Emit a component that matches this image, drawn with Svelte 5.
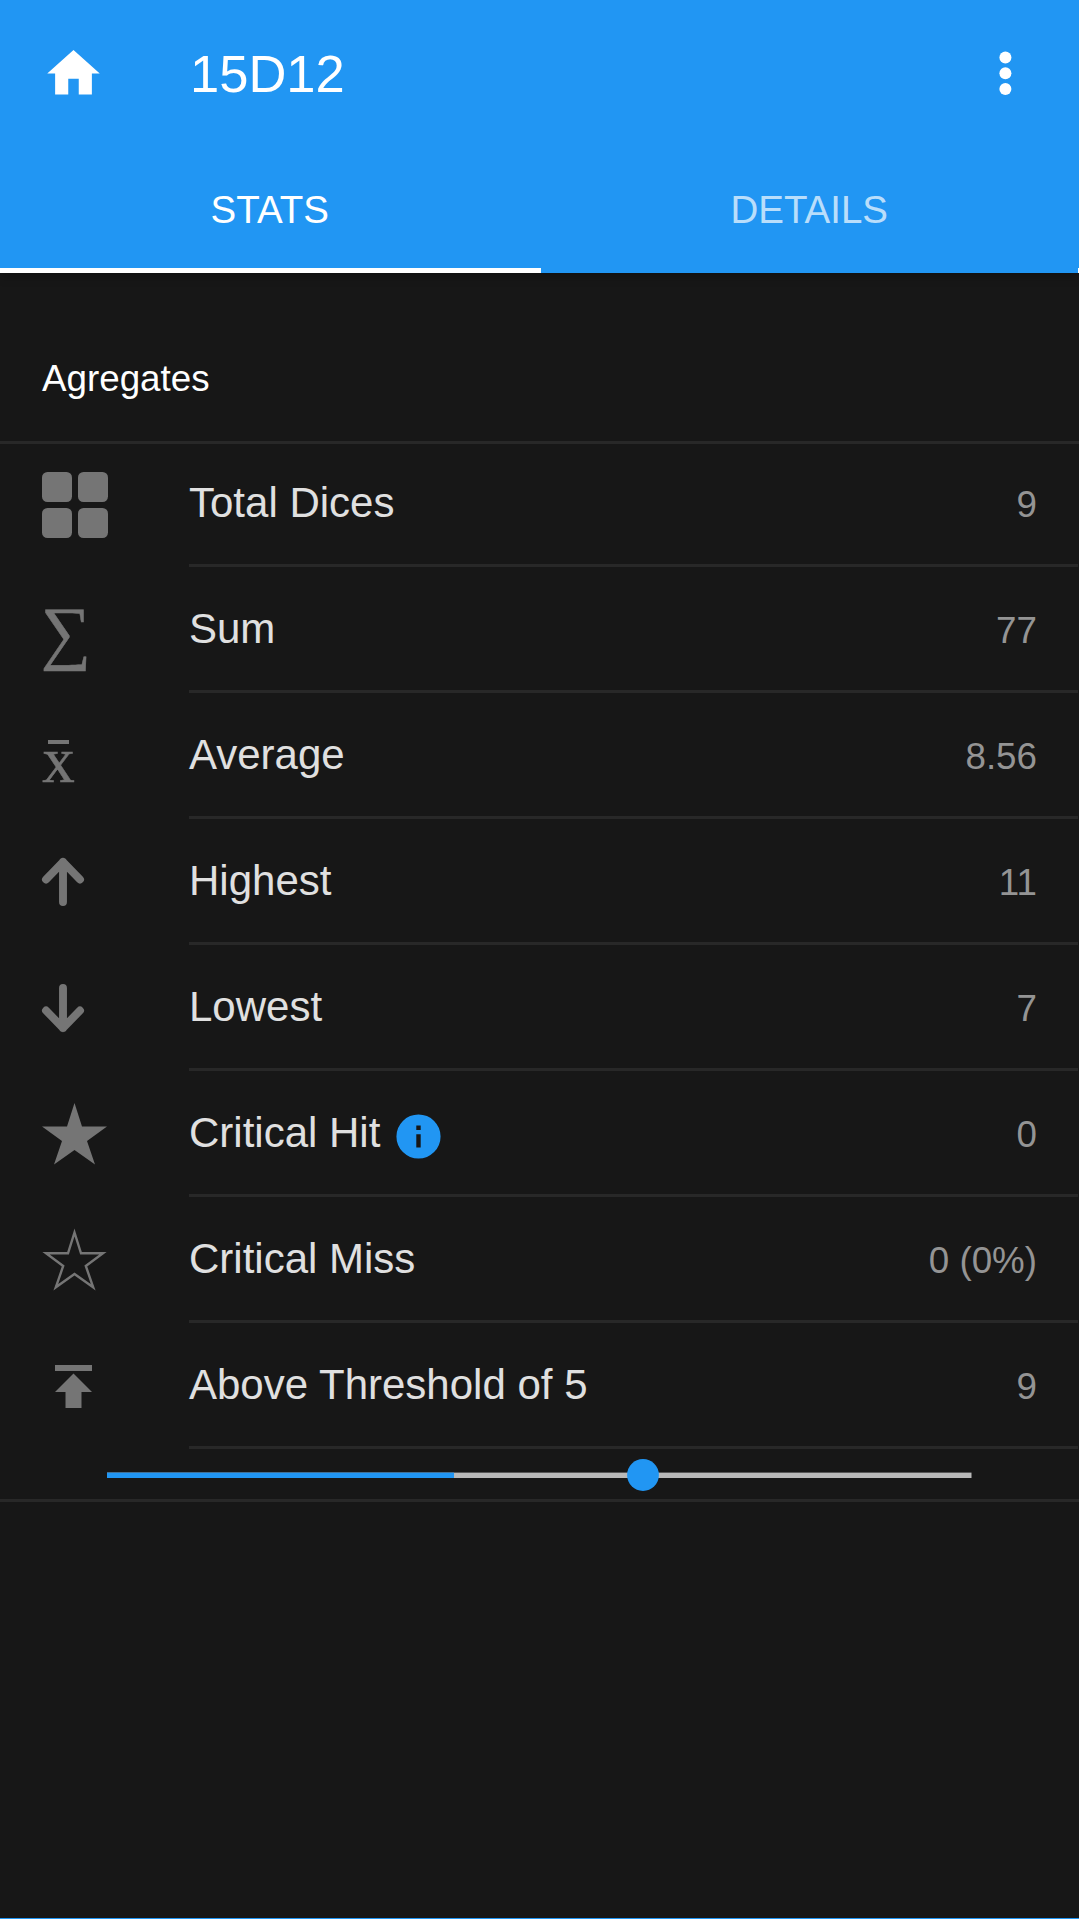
<script>
  let active = $state(0);
  const tabs = ['STATS', 'DETAILS'];
  const rows = [
    { icon: 'grid', label: 'Total Dices', value: '9' },
    { icon: 'sum', label: 'Sum', value: '77' },
    { icon: 'mean', label: 'Average', value: '8.56' },
    { icon: 'up', label: 'Highest', value: '11' },
    { icon: 'down', label: 'Lowest', value: '7' },
    { icon: 'star', label: 'Critical Hit', value: '0', info: true },
    { icon: 'outline', label: 'Critical Miss', value: '0 (0%)' },
    { icon: 'top', label: 'Above Threshold of 5', value: '9' }
  ];
</script>

<div class="page">
  <header>
    <div class="bar">
      <svg class="home" viewBox="0 0 24 24"><path d="M10 20v-6h4v6h5v-8h3L12 3 2 12h3v8z" /></svg>
      <h1>15D12</h1>
      <svg class="more" viewBox="0 0 20 52">
        <circle cx="10.4" cy="9.5" r="6" /><circle cx="10.4" cy="25.3" r="6" /><circle cx="10.4" cy="41.1" r="6" />
      </svg>
    </div>
    <nav>
      {#each tabs as tab, i}
        <button class:active={active === i} onclick={() => (active = i)}>{tab}</button>
      {/each}
      <div class="indicator" class:second={active === 1}></div>
    </nav>
  </header>

  <h2>Agregates</h2>

  <section>
    {#each rows as row}
      <div class="row">
        <svg class="icon" viewBox="0 0 66 126">
          {#if row.icon === 'grid'}
            <rect x="0" y="31" width="30" height="30" rx="5.5" /><rect x="36" y="31" width="30" height="30" rx="5.5" />
            <rect x="0" y="67" width="30" height="30" rx="5.5" /><rect x="36" y="67" width="30" height="30" rx="5.5" />
          {:else if row.icon === 'sum'}
            <text x="-1.3" y="88.5" font-size="70.5" stroke="#757575" stroke-width="0.5">∑</text>
          {:else if row.icon === 'mean'}
            <rect x="6" y="47" width="21" height="4" />
            <text x="0.3" y="89" font-size="65" stroke="#757575" stroke-width="0.5">x</text>
          {:else if row.icon === 'up'}
            <path class="stroke" d="M4 60.5 21 43 38 60.5M21 43V83" />
          {:else if row.icon === 'down'}
            <path class="stroke" d="M4 65.5 21 83 38 65.5M21 83V43" />
          {:else if row.icon === 'star'}
            <path d="M32.5 32 40 55.5H65L45 70 53 93.5 32.5 79 12 93.5 20 70 0 55.5H25z" />
          {:else if row.icon === 'outline'}
            <path class="thin" d="M32.5 35.5 39 56.3H61L43.8 69 51.2 90.3 32.5 77 13.8 90.3 21.2 69 4 56.3H26z" />
          {:else}
            <path d="M13 42H50V48H13zM31.5 50.5 50 69H39.5V85H23.5V69H13z" />
          {/if}
        </svg>
        <div class="content">
          <span class="label">{row.label}</span>
          {#if row.info}
            <svg class="info" viewBox="0 0 24 24"><path d="M12 2a10 10 0 1 0 0 20 10 10 0 0 0 0-20zm1 15h-2v-6h2v6zm0-8h-2V7h2v2z" /></svg>
          {/if}
          <span class="value">{row.value}</span>
        </div>
      </div>
    {/each}
    <div class="slider">
      <svg viewBox="0 0 864 32">
        <rect class="track" x="0" y="13.6" width="864.5" height="5.4" />
        <rect class="fill" x="0" y="13.6" width="347" height="5.4" />
        <circle class="fill" cx="536" cy="16" r="15.9" />
      </svg>
    </div>
  </section>
</div>

<style>
  :global(body) { background: #171717; }
  .page {
    width: 1079px; height: 1919px; box-sizing: border-box; overflow: hidden;
    background: #171717; color: #fff;
    font-family: "Liberation Sans", Arial, sans-serif;
    border-bottom: 1px solid #2196f3;
  }
  header { height: 273px; background: #2196f3; box-shadow: 0 3px 10px rgba(0, 0, 0, 0.3); }
  .bar { height: 147px; display: flex; align-items: center; padding: 0 64px 0 42px; box-sizing: border-box; }
  .home { width: 63px; height: 63px; fill: #fff; }
  h1 { margin: 0 auto 0 85px; font-size: 52.5px; font-weight: 400; line-height: 60px; }
  .more { width: 20px; height: 52px; fill: #fff; }
  nav { height: 126px; display: grid; grid-template: 121px 5px / 1fr 1fr; }
  button {
    border: 0; padding: 5px 0 0; background: none;
    font: 400 38.5px/42px "Liberation Sans", Arial, sans-serif; color: rgba(255, 255, 255, 0.7);
  }
  button.active { color: #fff; }
  .indicator { grid-column: 1 / -1; background: linear-gradient(90deg, #fff 541px, transparent 541px 1078px, #fff 1078px); }
  .indicator.second { background: linear-gradient(90deg, transparent 541px, #fff 541px); }
  h2 { margin: 0; height: 168px; padding: 85px 42px 0; box-sizing: border-box; font-size: 36.75px; font-weight: 400; line-height: 42px; }
  section { border-bottom: 3px solid #282828; box-shadow: inset 0 3px #282828; }
  .row { height: 126px; display: flex; padding-left: 42px; }
  .icon { width: 66px; height: 126px; fill: #757575; overflow: visible; font-family: "Liberation Serif", serif; }
  .stroke { fill: none; stroke: #757575; stroke-width: 7.9; stroke-linecap: round; stroke-linejoin: round; }
  .thin { fill: none; stroke: #757575; stroke-width: 2.4; stroke-miterlimit: 10; }
  .content { flex: 1; margin: 0 1px 0 81px; display: flex; align-items: center; padding-right: 41px; border-bottom: 3px solid #282828; }
  .label { font-size: 42px; line-height: 48px; color: #e0e0e0; }
  .info { width: 53px; height: 53px; margin: 7px 0 0 12px; fill: #2196f3; }
  .value { margin-left: auto; padding-top: 4px; font-size: 36.75px; line-height: 42px; color: #949494; }
  .slider { height: 50px; padding: 10px 107px 0; box-sizing: border-box; }
  .slider svg { display: block; width: 864px; height: 32px; overflow: visible; }
  .track { fill: #b9b9b9; }
  .fill { fill: #2196f3; }
</style>
